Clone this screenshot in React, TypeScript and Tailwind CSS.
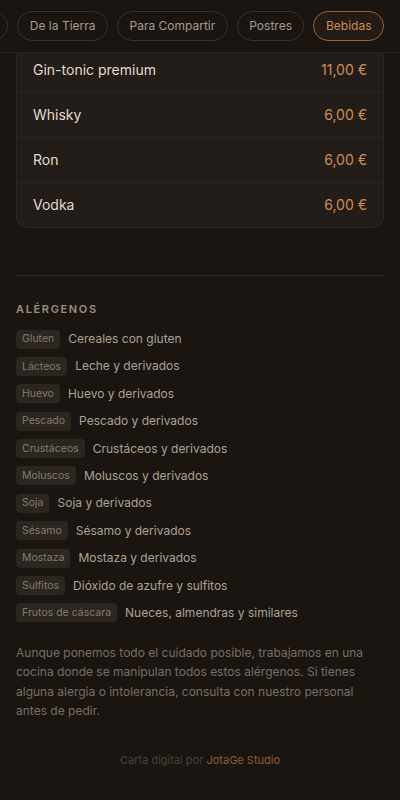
import React from "react";

const pills = ["Principales", "De la Tierra", "Para Compartir", "Postres", "Bebidas"];

const items = [
  { name: "Gin-tonic premium", price: "11,00 €" },
  { name: "Whisky", price: "6,00 €" },
  { name: "Ron", price: "6,00 €" },
  { name: "Vodka", price: "6,00 €" },
];

const allergens = [
  ["Gluten", "Cereales con gluten"],
  ["Lácteos", "Leche y derivados"],
  ["Huevo", "Huevo y derivados"],
  ["Pescado", "Pescado y derivados"],
  ["Crustáceos", "Crustáceos y derivados"],
  ["Moluscos", "Moluscos y derivados"],
  ["Soja", "Soja y derivados"],
  ["Sésamo", "Sésamo y derivados"],
  ["Mostaza", "Mostaza y derivados"],
  ["Sulfitos", "Dióxido de azufre y sulfitos"],
  ["Frutos de cáscara", "Nueces, almendras y similares"],
];

export default function App() {
  return (
    <div
      className="w-[400px] h-[800px] overflow-hidden bg-[#1a1511] flex flex-col"
      style={{ fontFamily: "Inter, 'Noto Sans', sans-serif" }}
    >
      <nav className="h-[53px] shrink-0 border-b border-[#2a231e] bg-[#1a1511] flex justify-end items-start pt-[11px] pr-4 gap-[9px] overflow-hidden">
        {pills.map((p) => {
          const active = p === "Bebidas";
          return (
            <div
              key={p}
              className={
                active
                  ? "shrink-0 h-[30px] px-[11.5px] rounded-full border border-[#9a6536] bg-[#241b14] text-[#cf8d4f] text-[12px] flex items-center whitespace-nowrap"
                  : "shrink-0 h-[30px] px-[11.5px] rounded-full border border-[#3a322b] text-[#a69a8d] text-[12px] flex items-center whitespace-nowrap"
              }
            >
              {p}
            </div>
          );
        })}
      </nav>

      <div className="mx-4 bg-[#221d19] border-x border-b border-[#2e2823] rounded-b-xl">
        {items.map((it, i) => (
          <div
            key={it.name}
            className={
              (i === 0 ? "pt-[7px] pb-3 " : "py-3 ") +
              (i < items.length - 1 ? "border-b border-[#2c2621] " : "") +
              "flex justify-between items-center px-4 text-[14px] leading-5"
            }
          >
            <span className="text-[#e4dacd]">{it.name}</span>
            <span className="text-[#cf8d4f]">{it.price}</span>
          </div>
        ))}
      </div>

      <div className="mx-4 mt-[47px] h-px bg-[#2e2823]" />

      <section className="px-4 pt-[25px]">
        <h2 className="text-[11px] leading-4 font-semibold tracking-[0.15em] text-[#9a8e82]">
          ALÉRGENOS
        </h2>
        <ul className="mt-[12px] flex flex-col gap-[7.4px]">
          {allergens.map(([tag, desc]) => (
            <li key={tag} className="flex items-center gap-2 h-5">
              <span className="h-[19px] px-[6px] rounded bg-[#2c2620] text-[#857a6f] text-[10.5px] flex items-center">
                {tag}
              </span>
              <span className="text-[12px] text-[#ada194]">{desc}</span>
            </li>
          ))}
        </ul>
        <p className="mt-[20px] text-[12px] leading-[19.5px] text-[#7a6e63]">
          Aunque ponemos todo el cuidado posible, trabajamos en una cocina donde se manipulan todos estos alérgenos. Si tienes alguna alergia o intolerancia, consulta con nuestro personal antes de pedir.
        </p>
        <p className="mt-[31px] text-center text-[11px] text-[#4a4038]">
          Carta digital por <span className="text-[#8c5e34]">JotaGe Studio</span>
        </p>
      </section>
    </div>
  );
}
